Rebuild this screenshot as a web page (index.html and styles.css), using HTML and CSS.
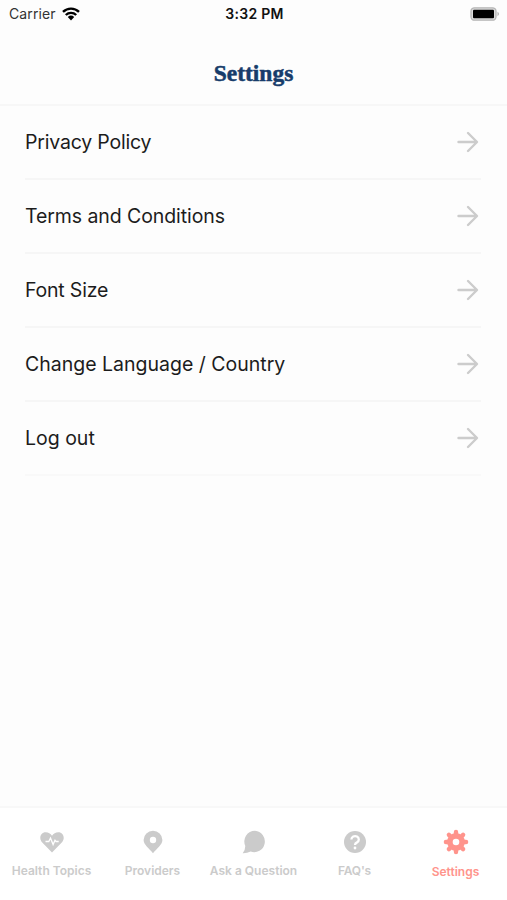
FILE: index.html
```html
<!DOCTYPE html>
<html lang="en">
<head>
    <meta charset="UTF-8">
    <meta name="viewport" content="width=device-width, initial-scale=1.0">
    <title>Settings</title>
    <link rel="stylesheet" href="styles.css">
</head>
<body>

    <div class="status-bar">
        <div class="carrier">
            <span>Carrier</span>
            <svg class="wifi" viewBox="0 0 18 14" width="18" height="14">
                <path d="M1 4.9a11.5 11.5 0 0 1 16 0M3.8 8a7.5 7.5 0 0 1 10.4 0" fill="none" stroke="#000" stroke-width="2.4"/>
                <path d="M5.8 10.1a4.7 4.7 0 0 1 6.4 0L9 13.4z" fill="#000"/>
            </svg>
        </div>
        <span class="time">3:32 PM</span>
        <svg class="battery" viewBox="0 0 30 14" width="30" height="14">
            <rect x="1" y="0.8" width="25" height="12.4" rx="3.5" fill="#ddd" stroke="#b5b5b5" stroke-width="1.3"/>
            <rect x="3" y="2.8" width="21" height="8.4" rx="1" fill="#000"/>
            <path d="M27.5 4.8q3 2.2 0 4.4z" fill="#b0b0b0"/>
        </svg>
    </div>

    <header class="header">
        <h1>Settings</h1>
    </header>

    <!-- Settings list -->
    <ul class="menu">
        <li class="menu-item">
            <span class="privacy">Privacy Policy</span>
            <svg class="arrow" viewBox="0 0 22 22"><path d="M1.5 11h18M11 2l9 9-9 9"/></svg>
        </li>
        <li class="menu-item">
            <span class="terms">Terms and Conditions</span>
            <svg class="arrow" viewBox="0 0 22 22"><path d="M1.5 11h18M11 2l9 9-9 9"/></svg>
        </li>
        <li class="menu-item">
            <span class="font-size">Font Size</span>
            <svg class="arrow" viewBox="0 0 22 22"><path d="M1.5 11h18M11 2l9 9-9 9"/></svg>
        </li>
        <li class="menu-item">
            <span>Change Language / Country</span>
            <svg class="arrow" viewBox="0 0 22 22"><path d="M1.5 11h18M11 2l9 9-9 9"/></svg>
        </li>
        <li class="menu-item">
            <span>Log out</span>
            <svg class="arrow" viewBox="0 0 22 22"><path d="M1.5 11h18M11 2l9 9-9 9"/></svg>
        </li>
    </ul>

    <!-- Bottom tabs -->
    <nav class="tab-bar">
        <div class="tab">
            <svg viewBox="0 0 26 26">
                <path d="M13 23.5L3 13.2C-.4 9.4 1.5 3.200 6.700 3.200c2.700 0 4.800 1.300 6.300 3.500 1.500-2.200 3.600-3.500 6.300-3.500 5.200 0 7.100 6.200 3.700 10z" fill="currentColor"/>
                <path d="M6.500 12.500h3.300l1.700-3.500 2.600 6.500 1.900-4.300 1 1.300h2.700" fill="none" stroke="#fff" stroke-width="1.300"/>
            </svg>
            <span>Health Topics</span>
        </div>
        <div class="tab">
            <svg viewBox="0 0 26 26">
                <path d="M13 24.200C9.500 19.800 3.600 15.800 3.600 11a9.400 9.200 0 0 1 18.800 0c0 4.800-5.900 8.800-9.400 13.200z" fill="currentColor"/>
                <circle cx="13" cy="11" r="3.200" fill="#fff"/>
            </svg>
            <span>Providers</span>
        </div>
        <div class="tab">
            <svg viewBox="0 0 26 26">
                <path d="M14 1.800a10.700 10.700 0 1 1-4.300 20.800Q6 24.300 1.700 24.200 4.200 21.500 4.300 17A10.700 10.700 0 0 1 14 1.800z" fill="currentColor"/>
            </svg>
            <span>Ask a Question</span>
        </div>
        <div class="tab">
            <svg viewBox="0 0 26 26">
                <circle cx="13" cy="13" r="11" fill="currentColor"/>
                <path d="M9.400 10.500a3.700 3.400 0 1 1 5.600 2.900q-2 1-2 2.700" fill="none" stroke="#fff" stroke-width="2.300"/>
                <circle cx="13" cy="19" r="1.400" fill="#fff"/>
            </svg>
            <span class="faq">FAQ's</span>
        </div>
        <div class="tab active">
            <svg viewBox="0 0 26 26">
                <g stroke="currentColor" stroke-width="4.400" stroke-linecap="round">
                    <path d="M13 2.900v20.200M2.900 13h20.200M5.900 5.900l14.200 14.200M20.100 5.900L5.900 20.100"/>
                </g>
                <circle cx="13" cy="13" r="8.900" fill="currentColor"/>
                <circle cx="13" cy="13" r="3.300" fill="#fff"/>
            </svg>
            <span>Settings</span>
        </div>
    </nav>

</body>
</html>
```
FILE: styles.css
```css
* {
    box-sizing: border-box;
}

body {
    margin: 0;
    height: 100vh;
    display: flex;
    flex-direction: column;
    background-color: #fdfdfd;
    font-family: Inter, 'Liberation Sans', sans-serif;
    color: #1c1c1c;
}

.status-bar {
    height: 27px;
    padding: 0 7px 0 9px;
    display: grid;
    grid-template-columns: 1fr auto 1fr;
    align-items: center;
    font-size: 14px;
}

.carrier {
    display: flex;
    align-items: center;
    gap: 6px;
    color: #333;
    letter-spacing: 0.1px;
}

.time {
    font-weight: 600;
    color: #111;
    letter-spacing: 0.3px;
}

.battery {
    justify-self: end;
}

.header {
    height: 79px;
    padding-top: 32px;
    border-bottom: 2px solid #f7f7f7;
    text-align: center;
}

h1 {
    margin: 0;
    font-family: 'Liberation Serif', serif;
    font-size: 23.5px;
    line-height: 28px;
    font-weight: bold;
    color: #173c6b;
    -webkit-text-stroke: 0.5px #173c6b;
}

.menu {
    flex: 1;
    margin: 0;
    padding: 0 26px 0 25px;
    list-style: none;
}

.menu-item {
    height: 74px;
    padding-right: 2px;
    display: flex;
    align-items: center;
    justify-content: space-between;
    border-bottom: 2px solid #f6f6f6;
    font-size: 19.5px;
    white-space: nowrap;
}

.menu-item:last-child {
    border-bottom-color: #f9f9f9;
}

.privacy,
.font-size {
    letter-spacing: -0.2px;
}

.terms {
    letter-spacing: -0.08px;
}

.arrow {
    width: 22px;
    height: 22px;
    fill: none;
    stroke: #ccc;
    stroke-width: 2.4;
    stroke-linecap: round;
    stroke-linejoin: round;
}

.tab-bar {
    height: 94px;
    padding: 21px 0 0 1px;
    display: grid;
    grid-template-columns: repeat(5, 101px);
    border-top: 2px solid #f8f8f8;
    background-color: #fff;
}

.tab {
    display: flex;
    flex-direction: column;
    align-items: center;
    gap: 8px;
    color: #cbcbcb;
    font-size: 12px;
    line-height: 16px;
    font-weight: 600;
    white-space: nowrap;
}

.tab svg {
    width: 26px;
    height: 26px;
}

.faq {
    letter-spacing: -0.2px;
}

.active {
    gap: 9px;
    color: #ff948c;
}
```
